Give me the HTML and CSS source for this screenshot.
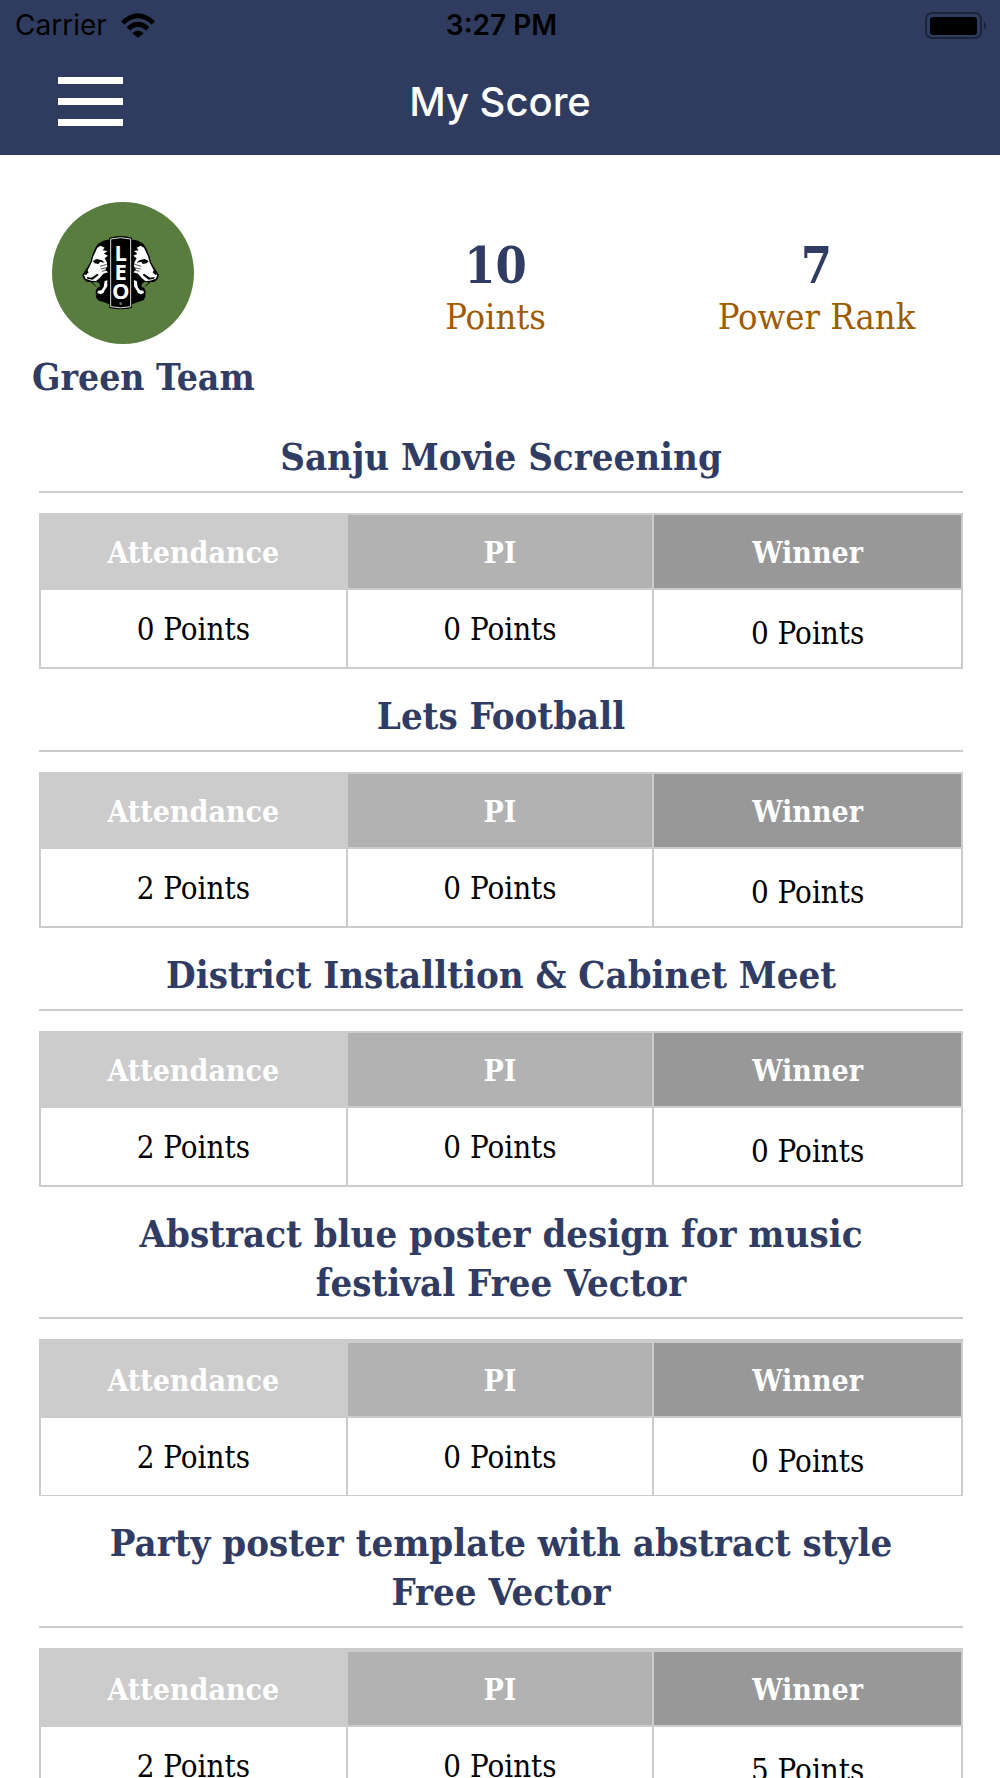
FILE: index.html
```html
<!DOCTYPE html>
<html lang="en">
<head>
  <meta charset="UTF-8">
  <meta name="viewport" content="width=device-width, initial-scale=1.0">
  <title>My Score</title>
  <link rel="stylesheet" href="styles.css">
</head>
<body>
<header class="header">
  <div class="status-bar">
    <div class="status-left">
      <span class="carrier">Carrier</span>
      <svg class="wifi" viewBox="0 0 102 74" aria-hidden="true">
        <path d="M0 24 Q51 -24 102 24 L92 34 Q51 -4 10 34 Z"/>
        <path d="M17 42 Q51 10 85 42 L75 52 Q51 30 27 52 Z"/>
        <path d="M34 60 Q51 44 68 60 L51 74 Z"/>
      </svg>
    </div>
    <span class="time">3:27 PM</span>
    <div class="status-right">
      <svg class="battery" viewBox="0 0 63 27" aria-hidden="true">
        <rect x="1" y="1" width="55" height="25" rx="6" fill="none" stroke="#1c243a" stroke-width="2"/>
        <rect x="5" y="5" width="47" height="18" rx="3"/>
        <path d="M59 9 Q63 13.5 59 18 Z" fill="#1c243a"/>
      </svg>
    </div>
  </div>
  <div class="nav-bar">
    <button class="menu-btn" type="button" aria-label="Menu">
      <span class="menu-line"></span>
      <span class="menu-line"></span>
      <span class="menu-line"></span>
    </button>
    <h1 class="title">My Score</h1>
  </div>
</header>

<main>
  <div class="summary">
    <div class="team">
      <svg class="team-logo" viewBox="0 0 426 426" role="img" aria-label="Leo club">
        <defs>
          <g id="lion">
            <path d="M124 42 L100 47 L84 56 L76 68 L66 92 L61 112 L50 130 L37 150 L41 162 L50 170 L64 172 L76 184 L83 186 L77 198 L78 216 L84 226 L102 232 L124 240 Z"/>
            <path fill="#fff" d="M82 68 L92 62 L104 68 L98 76 L112 78 L102 86 L114 92 L104 100 L110 110 L112 124 L106 134 L114 142 L100 146 L88 160 L78 168 L64 167 L47 161 L42 150 L54 134 L65 112 L70 94 Z"/>
            <path fill="#fff" d="M104 168 L112 166 L112 184 L104 196 L100 204 L92 208 L82 204 L84 197 L94 196 L101 186 Z"/>
            <path d="M50 156 L64 158 L82 146 L86 150 L68 164 L52 161 Z"/>
            <path d="M68 108 L80 102 L96 106 L104 114 L90 110 L86 117 L74 115 Z"/>
            <path d="M43 148 L52 136 L56 142 L48 150 Z"/>
            <path d="M90 124 L110 118 M92 132 L112 128 M96 139 L108 136" stroke="#000" stroke-width="2" fill="none"/>
            <path fill="#587d3e" d="M68 172 L80 170 L88 176 L90 184 L84 188 L78 184 Z"/>
          </g>
        </defs>
        <circle cx="213" cy="213" r="213" fill="#587d3e"/>
        <g transform="translate(54 69)">
          <use href="#lion"/>
          <use href="#lion" transform="translate(304 0) scale(-1 1)"/>
          <path d="M118 38 Q152 28 186 38 V249 Q152 257 118 249 Z" fill="#000"/>
          <path d="M122 42 Q152 34 182 42 V245 Q152 252 122 245 Z" fill="#000" stroke="#ddd" stroke-width="3"/>
          <g class="logo-text">
            <text x="152" y="108">L</text>
            <text x="152" y="166">E</text>
            <text x="152" y="223">O</text>
          </g>
          <circle cx="152" cy="236" r="4" fill="#777"/>
        </g>
      </svg>
      <h2 class="team-name">Green Team</h2>
    </div>
    <div class="stat">
      <div class="stat-value">10</div>
      <div class="stat-label">Points</div>
    </div>
    <div class="stat">
      <div class="stat-value">7</div>
      <div class="stat-label">Power Rank</div>
    </div>
  </div>

  <section class="event">
    <h2 class="event-title">Sanju Movie Screening</h2>
    <table class="score">
      <thead>
        <tr><th class="attendance">Attendance</th><th class="pi">PI</th><th class="winner">Winner</th></tr>
      </thead>
      <tbody>
        <tr><td>0 Points</td><td>0 Points</td><td class="winner-points">0 Points</td></tr>
      </tbody>
    </table>
  </section>

  <section class="event">
    <h2 class="event-title">Lets Football</h2>
    <table class="score">
      <thead>
        <tr><th class="attendance">Attendance</th><th class="pi">PI</th><th class="winner">Winner</th></tr>
      </thead>
      <tbody>
        <tr><td>2 Points</td><td>0 Points</td><td class="winner-points">0 Points</td></tr>
      </tbody>
    </table>
  </section>

  <section class="event">
    <h2 class="event-title">District Installtion &amp; Cabinet Meet</h2>
    <table class="score">
      <thead>
        <tr><th class="attendance">Attendance</th><th class="pi">PI</th><th class="winner">Winner</th></tr>
      </thead>
      <tbody>
        <tr><td>2 Points</td><td>0 Points</td><td class="winner-points">0 Points</td></tr>
      </tbody>
    </table>
  </section>

  <section class="event long">
    <h2 class="event-title">Abstract blue poster design for music festival Free Vector</h2>
    <table class="score">
      <thead>
        <tr><th class="attendance">Attendance</th><th class="pi">PI</th><th class="winner">Winner</th></tr>
      </thead>
      <tbody>
        <tr><td>2 Points</td><td>0 Points</td><td class="winner-points">0 Points</td></tr>
      </tbody>
    </table>
  </section>

  <section class="event long">
    <h2 class="event-title">Party poster template with abstract style Free Vector</h2>
    <table class="score">
      <thead>
        <tr><th class="attendance">Attendance</th><th class="pi">PI</th><th class="winner">Winner</th></tr>
      </thead>
      <tbody>
        <tr><td>2 Points</td><td>0 Points</td><td class="winner-points">5 Points</td></tr>
      </tbody>
    </table>
  </section>
</main>
</body>
</html>
```
FILE: styles.css
```css
* {
  margin: 0;
  padding: 0;
  box-sizing: border-box;
}

html {
  height: 100%;
  overflow: hidden;
}

body {
  height: 100%;
  overflow-y: auto;
  scrollbar-width: none;
  background: #fff;
  color: #000;
  font-family: "DejaVu Serif Condensed", "DejaVu Serif", serif;
}

.header {
  background: #303c5f;
  font-family: Inter, Roboto, sans-serif;
}

/* status bar */
.status-bar {
  display: grid;
  grid-template-columns: 1fr auto 1fr;
  align-items: center;
  height: 50px;
  padding: 0 12px 0 15px;
}

.status-left {
  display: flex;
  align-items: center;
  gap: 14px;
}

.carrier {
  font-size: 28px;
}

.wifi {
  width: 34px;
  height: 25px;
}

.time {
  font-size: 28px;
  font-weight: 600;
}

.status-right {
  display: flex;
  justify-content: flex-end;
}

.battery {
  width: 63px;
  height: 27px;
}

/* nav bar */
.nav-bar {
  display: grid;
  grid-template-columns: 1fr auto 1fr;
  align-items: center;
  height: 105px;
  padding: 0 58px 2px;
}

.menu-btn {
  display: flex;
  flex-direction: column;
  justify-content: space-between;
  width: 65px;
  height: 49px;
  border: none;
  background: none;
  cursor: pointer;
}

.menu-line {
  width: 100%;
  height: 7px;
  background: #fff;
}

.title {
  color: #fff;
  font-size: 40px;
  font-weight: 500;
}

/* team summary */
.summary {
  display: grid;
  grid-template-columns: 17fr 18fr 18fr;
  padding: 47px 23px 0 32px;
}

.team-logo {
  display: block;
  width: 142px;
  height: 142px;
  margin-left: 20px;
}

.logo-text {
  fill: #fff;
  font-family: "Liberation Sans Narrow", "Open Sans", sans-serif;
  font-size: 66px;
  font-weight: bold;
  text-anchor: middle;
}

.team-name {
  margin-top: 9px;
  color: #303c63;
  font-size: 37px;
  line-height: 49px;
}

.stat {
  padding-top: 33px;
  text-align: center;
}

.stat-value {
  color: #303c63;
  font-size: 50px;
  font-weight: bold;
  line-height: 62px;
}

.stat-label {
  color: #a05a00;
  font-size: 36px;
  line-height: 40px;
}

/* event score cards */
.event {
  padding: 22px 37px 0 39px;
}

.summary + .event {
  padding-top: 30px;
}

.event-title {
  margin-bottom: 20px;
  padding: 0 40px 10px;
  border-bottom: 2px solid #ccc;
  color: #303c63;
  font-size: 38px;
  line-height: 49px;
  text-align: center;
}

.score {
  width: 100%;
  table-layout: fixed;
  border-collapse: separate;
  border-spacing: 0;
  border: 2px solid #ccc;
}

.long .score {
  border-top-width: 4px;
  border-bottom-width: 1px;
}

.score th {
  height: 75px;
  padding-top: 2px;
  border-bottom: 2px solid #ccc;
  color: #fff;
  font-size: 30px;
  line-height: 40px;
}

.score td {
  height: 77px;
  font-size: 31px;
  line-height: 40px;
  text-align: center;
}

.score th:not(:last-child),
.score td:not(:last-child) {
  border-right: 2px solid #ccc;
}

.attendance {
  background: #ccc;
}

.pi {
  background: #b2b2b2;
}

.winner {
  background: #989898;
}

.score .winner-points {
  padding-top: 8px;
}
```
